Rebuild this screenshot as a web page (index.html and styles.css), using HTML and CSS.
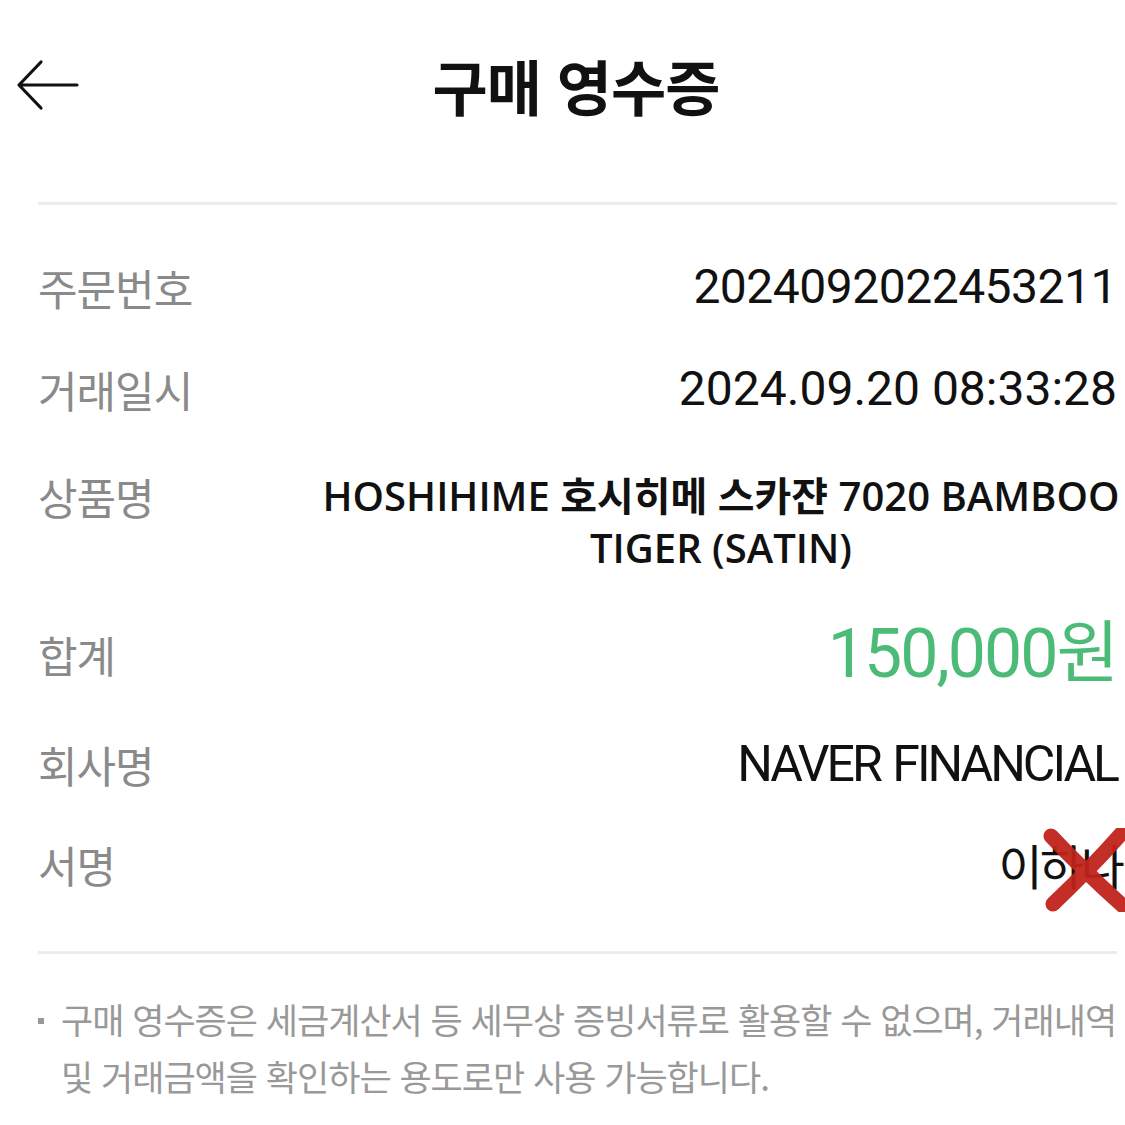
FILE: index.html
```html
<!DOCTYPE html>
<html lang="ko">
<head>
<meta charset="utf-8">
<title>구매 영수증</title>
<link rel="stylesheet" href="styles.css">
</head>
<body>
<div class="page">
  <header class="header">
    <div class="back">
      <svg width="64" height="52" viewBox="0 0 64 52"><path d="M62 26H4M26 3L4 26L26 49" fill="none" stroke="#111" stroke-width="3.2" stroke-linecap="round" stroke-linejoin="round"/></svg>
    </div>
    <h1 class="title">구매 영수증</h1>
    <div></div>
  </header>
  <div class="divider"></div>
  <section class="rows">
    <div class="row r1"><div class="label">주문번호</div><div class="value num">2024092022453211</div></div>
    <div class="row r2"><div class="label">거래일시</div><div class="value num date">2024.09.20 08:33:28</div></div>
    <div class="row r3"><div class="label">상품명</div><div class="value prod">HOSHIHIME 호시히메 스카쟌 7020 BAMBOO TIGER (SATIN)</div></div>
    <div class="row r4"><div class="label">합계</div><div class="value total">150,000원</div></div>
    <div class="row r5"><div class="label">회사명</div><div class="value company">NAVER FINANCIAL</div></div>
    <div class="row r6"><div class="label">서명</div><div class="value sign"><span class="signname">이하나</span>
      <svg class="cross" width="90" height="84" viewBox="0 0 90 84"><path d="M10 8 Q42 42 82 78 M80 6 Q50 40 12 76" fill="none" stroke="#c0231a" stroke-width="15" stroke-linecap="round" opacity="0.95"/></svg>
    </div></div>
  </section>
  <div class="divider bottom"></div>
  <p class="note"><span class="dot"></span><span class="notetext">구매 영수증은 세금계산서 등 세무상 증빙서류로 활용할 수 없으며, 거래내역 및 거래금액을 확인하는 용도로만 사용 가능합니다.</span></p>
</div>
</body>
</html>
```
FILE: styles.css
```css
html, body { margin: 0; padding: 0; background: #fff; }
body { font-family: "Noto Sans CJK KR", "Noto Sans", sans-serif; color: #111; }
.page { width: 1125px; height: 1125px; overflow: hidden; }
.header {
  display: grid;
  grid-template-columns: 1fr auto 1fr;
  align-items: center;
  height: 170px;
  padding: 0 0 0 15px;
}
.back { display: flex; align-items: center; }
.title {
  margin: 0;
  font-size: 60px;
  font-weight: 700;
  letter-spacing: -1px;
  padding-left: 12px;
  line-height: 1;
}
.divider { height: 3px; background: #ececec; margin: 32px 8px 0 38px; }
.divider.bottom { margin-top: 0; }
.rows { padding: 54px 8px 0 38px; display: flex; flex-direction: column; }
.row { display: flex; justify-content: space-between; align-items: flex-start; }
.r1 { height: 102px; }
.r2 { height: 107px; }
.r3 { height: 158px; }
.r4 { height: 110px; }
.r5 { height: 100px; }
.r6 { height: 115px; }
.label { font-size: 43px; color: #8a8a8a; font-weight: 400; line-height: 56px; letter-spacing: -1px; white-space: nowrap; }
.value { text-align: right; line-height: 56px; white-space: nowrap; }
.num { font-family: Roboto, "Noto Sans CJK KR", sans-serif; font-size: 48px; letter-spacing: -0.5px; }
.date { letter-spacing: 0; }
.prod {
  font-family: "Open Sans", "Noto Sans CJK KR", sans-serif;
  font-weight: 600;
  font-size: 40px;
  line-height: 52px;
  text-align: center;
  white-space: normal;
  width: 820px;
  margin-right: -14px;
  margin-top: 2px;
}
.total { font-family: Roboto, "Noto Sans CJK KR", sans-serif; font-size: 68px; color: #4cbb78; letter-spacing: -2px; }
.company { font-family: Roboto, sans-serif; font-size: 50px; letter-spacing: -3px; word-spacing: 3px; }
.sign { position: relative; font-size: 48px; font-family: "Noto Sans CJK KR", sans-serif; margin-right: -5px; }
.signname { letter-spacing: -3px; }
.cross { position: absolute; right: -9px; top: -8px; }
.note { display: flex; gap: 17px; margin: 36px 8px 0 38px; font-size: 35px; line-height: 57px; color: #999; letter-spacing: -1px; }
.notetext { word-break: keep-all; }
.dot { flex: none; width: 6px; height: 6px; background: #999; margin-top: 28px; }
```
